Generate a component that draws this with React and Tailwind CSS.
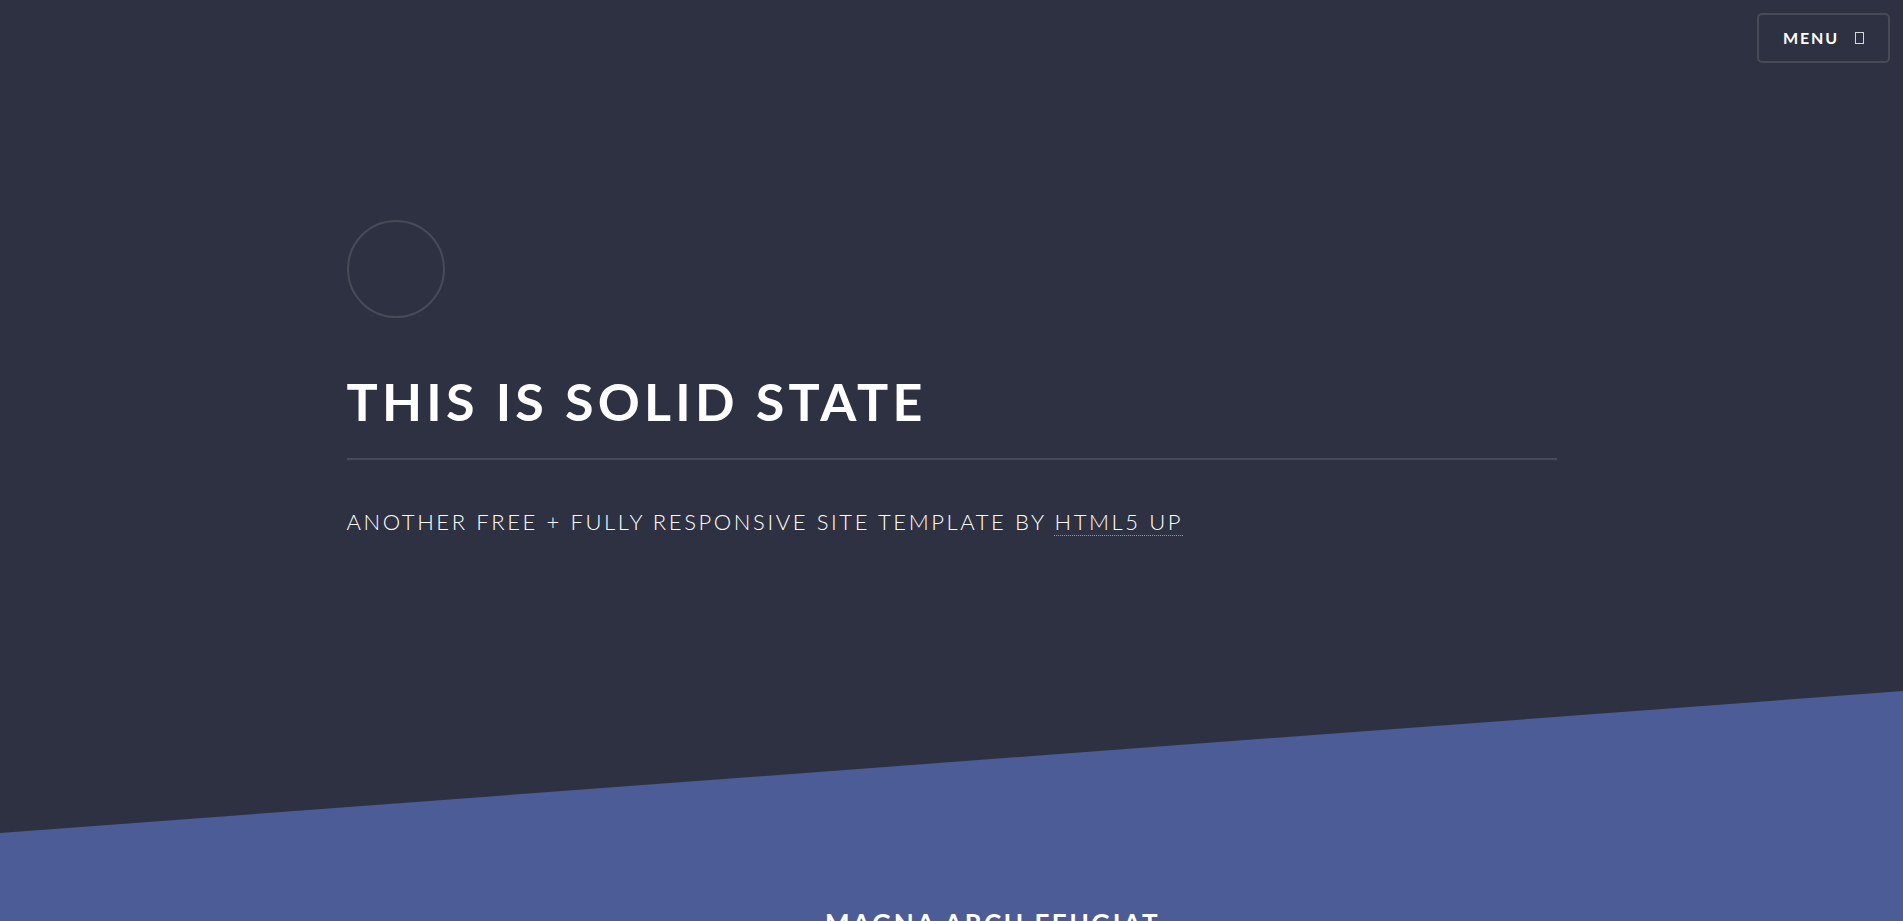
import React from 'react';

const font = { fontFamily: 'Lato, "Open Sans", sans-serif' };

function Header() {
  return (
    <header className="absolute top-0 right-0 z-10 p-[13px]">
      <button className="flex h-[50px] w-[133px] items-center justify-center gap-[16px] rounded-[5px] border-2 border-white/[0.125] text-[16px] font-bold tracking-[0.12em] text-white">
        MENU
        {/* missing icon font glyph */}
        <span className="inline-block h-[12px] w-[9px] border border-white/80" />
      </button>
    </header>
  );
}

function Banner() {
  return (
    <section className="bg-[#2e3141] pt-[220px]">
      <div className="mx-auto w-[1210px]">
        <div className="h-[98px] w-[98px] rounded-full border-2 border-white/[0.125]" />
        <h2 className="mt-[50px] text-[52px] font-bold leading-[1.3] tracking-[0.082em] text-white">
          THIS IS SOLID STATE
        </h2>
        <div className="mt-[22px] h-[2px] w-full bg-white/[0.125]" />
        <p className="mt-[45px] text-[22px] font-light tracking-[0.118em] text-white">
          ANOTHER FREE + FULLY RESPONSIVE SITE TEMPLATE BY{' '}
          <a className="border-b border-dotted border-white/50 text-white">HTML5 UP</a>
        </p>
      </div>
      <div className="h-[153px]" />
    </section>
  );
}

function Spotlight() {
  return (
    <section className="bg-[#4c5c96]">
      <svg className="block h-[142px] w-full bg-[#2e3141]" viewBox="0 0 1903 142" preserveAspectRatio="none">
        <polygon points="0,142 1903,0 1903,142" fill="#4c5c96" />
      </svg>
      <div className="pl-[825px] pt-[71px] pb-[200px]">
        <h2 className="text-[26px] font-bold tracking-[0.1em] text-white">MAGNA ARCU FEUGIAT</h2>
      </div>
    </section>
  );
}

export default function App() {
  return (
    <div className="relative min-h-screen overflow-hidden bg-[#2e3141]" style={font}>
      <Header />
      <Banner />
      <Spotlight />
    </div>
  );
}
